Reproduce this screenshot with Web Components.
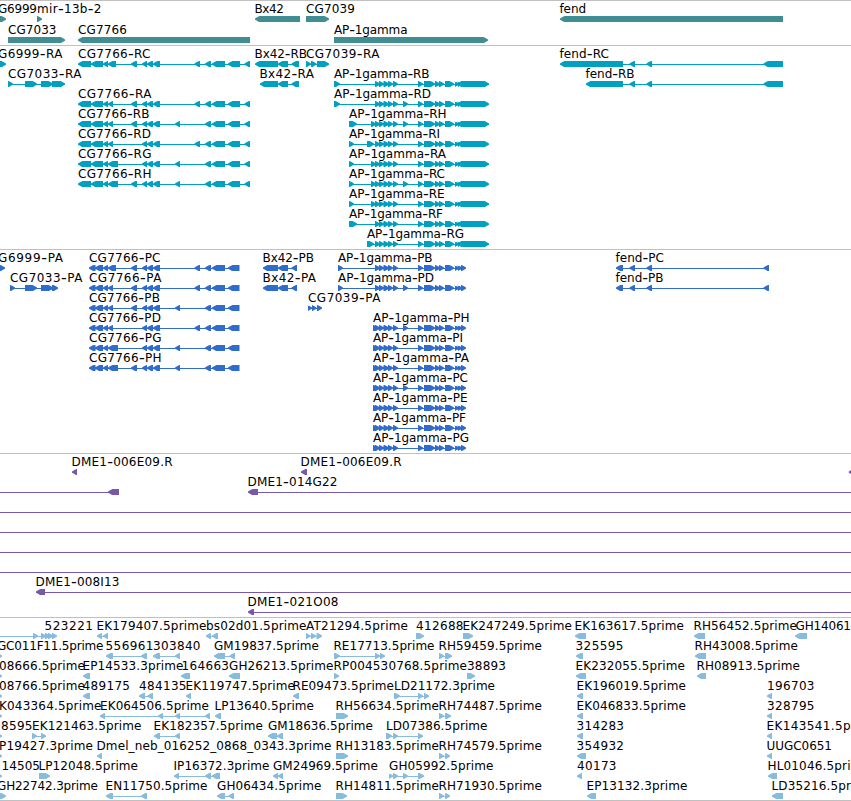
<!DOCTYPE html>
<html lang="en">
<head>
<meta charset="utf-8">
<title>Genome tracks</title>
<style>
    body {
        margin: 0;
        background: #fff;
        overflow: hidden;
        font-family: "DejaVu Sans", sans-serif;
    }
</style>
</head>
<body>
<genome-browser></genome-browser>

<script>
// One feature: a label over a chain of exons joined by an intron line.
class GenomeFeature extends HTMLElement {
    constructor() {
        super();
        this.attachShadow({ mode: 'open' });
    }

    connectedCallback() {
        this.render();
    }

    exonPath(from, to, dir) {
        const s = dir === '-' ? 1 : -1;
        const tip = dir === '-' ? from : to;
        const back = dir === '-' ? to : from;
        return `M${back} 15H${tip + s * 4.5}L${tip + s * 2} 16.3L${tip} 17.6V18.8L${tip + s * 2} 19.8L${tip + s * 4} 21H${back}Z`;
    }

    // wide hyphens, kept on the same optical height
    labelMarkup(label) {
        return label.replace(/-(.)/g, '<tspan class="dash" dy="0.8">-</tspan><tspan dy="-0.8">$1</tspan>');
    }

    render() {
        const label = this.getAttribute('label') || '';
        const x = parseFloat(this.getAttribute('x')) || 0;
        const width = this.getAttribute('width');
        const dir = this.getAttribute('dir') || '+';
        const line = (this.getAttribute('line') || '').split(':').map(Number);
        const exons = (this.getAttribute('exons') || '').split(' ').filter(Boolean)
            .map(e => e.split(':').map(Number));

        const start = line.length > 1 ? line[0] : exons.length ? exons[0][0] + 1 : 0;
        const end = line.length > 1 ? line[1] : exons.length ? exons[exons.length - 1][1] - 1 : 0;

        this.shadowRoot.innerHTML = `
            <style>
                :host { display: block; grid-area: 1 / 1; pointer-events: none; }
                svg { display: block; overflow: visible; }
                path, rect { fill: var(--feature-color, #000); }
                rect { shape-rendering: crispEdges; }
                text { font-size: 12px; fill: #000; }
                .dash { font-size: 16px; }
            </style>
            <svg width="851" height="20">
                <rect x="${start}" y="18" width="${Math.max(0, end - start)}" height="1"/>
                <path d="${exons.map(e => this.exonPath(e[0], e[1], dir)).join('')}"/>
                ${label ? `<text x="${x}" y="12" textLength="${width}">${this.labelMarkup(label)}</text>` : ''}
            </svg>
        `;
    }
}

class TrackRow extends HTMLElement {
    constructor() {
        super();
        this.attachShadow({ mode: 'open' });
        this.shadowRoot.innerHTML = `
            <style>
                :host { display: grid; grid-template: 20px / 851px; }
            </style>
            <slot></slot>
        `;
    }
}

class GenomeTrack extends HTMLElement {
    constructor() {
        super();
        this.attachShadow({ mode: 'open' });
        this.shadowRoot.innerHTML = `
            <style>
                :host {
                    display: flex;
                    flex-direction: column;
                    gap: var(--row-gap, 0);
                    padding-bottom: var(--track-pad, 3px);
                    border-top: 1px solid #c0c0c0;
                }
            </style>
            <slot></slot>
        `;
    }
}

// Shared exon runs
const cgMid = '142:147 147:153 153:160';
const cgR = '205:211 212:225 228:240 244.5:250';
const cgP = '205:211 212:225 228:239.5';
const cgHeadR = '78:91 91:103 103:108';
const cgHeadP = '89:95.5 95:103 103:108';
const apMid = '375:380 379:384 383.5:389 388:393 393:398';
const apSkip = '403:408';
const apBody = '418:423 424:435 435:440 439:444 445:454 455:459 458:462';
const apR = apBody + ' 460.5:489';
const apP = apBody + ' 461:466';
const fendMid = '629.5:635 646.5:652';

// [label, x, width, direction, exons, line]
const tracks = [
    { color: '#408e94', gap: '1px', rows: [
        [
            ['G6999', -2, 39, '+', '-5:6'],
            ['mir-13b-2', 37, 64.5, '+', '37:42'],
            ['Bx42', 254.5, 29.5, '-', '255:300'],
            ['CG7039', 306, 49, '+', '306:329'],
            ['fend', 559.5, 26.5, '-', '560:783']
        ],
        [
            ['CG7033', 8, 48.5, '+', '8:65'],
            ['CG7766', 78, 49, '-', '78:250'],
            ['AP-1gamma', 334, 73.5, '+', '334:488']
        ]
    ] },
    { color: '#00a0c0', rows: [
        [
            ['G6999-RA', -2, 64.5, '+', '-5:6'],
            ['CG7766-RC', 78, 72.5, '-', `${cgHeadR} 108:116 131:137 ${cgMid} 194.5:200 ${cgR}`],
            ['Bx42-RB', 254.5, 52.5, '-', '255:278 278:288 291.5:299'],
            ['CG7039-RA', 306, 73.5, '+', '306:311 311:316.5 317:329'],
            ['fend-RC', 559.5, 49.5, '-', `560:623 ${fendMid} 763.5:783`]
        ],
        [
            ['CG7033-RA', 8, 73.5, '+', '8:13 25:37 41:53 52:65'],
            ['Bx42-RA', 259.5, 54.5, '-', '260:278 278:288 291.5:299'],
            ['AP-1gamma-RB', 334, 95.5, '+', `334:340 ${apMid} ${apR}`],
            ['fend-RB', 585.5, 49, '-', `586:623 ${fendMid} 763.5:783`]
        ],
        [
            ['CG7766-RA', 78, 73.5, '-', `${cgHeadR} 108:113 131:137 ${cgMid} 194.5:200 ${cgR}`],
            ['AP-1gamma-RD', 334, 97, '+', `334:340 ${apMid} ${apSkip} ${apR}`]
        ],
        [
            ['CG7766-RB', 78, 71.5, '-', `${cgHeadR} 108:113 131:137 ${cgMid} 175:180 ${cgR}`],
            ['AP-1gamma-RH', 349, 97.5, '+', `349:357 371:376 ${apMid} ${apSkip} ${apR}`]
        ],
        [
            ['CG7766-RD', 78, 73, '-', `${cgHeadR} 108:113 ${cgMid} 194.5:200 ${cgR}`],
            ['AP-1gamma-RI', 349, 91, '+', `349:354 367:374 ${apMid} ${apR}`]
        ],
        [
            ['CG7766-RG', 78, 73.5, '-', `${cgHeadR} 108:118 ${cgMid} 175:180 ${cgR}`],
            ['AP-1gamma-RA', 349, 97, '+', `349:354 371:376 ${apMid} ${apR}`]
        ],
        [
            ['CG7766-RH', 78, 73.5, '-', `${cgHeadR} 108:118 131:137 ${cgMid} 175:180 ${cgR}`],
            ['AP-1gamma-RC', 349, 96, '+', `349:354 371:376 ${apMid} ${apSkip} ${apR}`]
        ],
        [['AP-1gamma-RE', 349, 95.5, '+', `349:354 371:376 ${apMid} ${apR}`]],
        [['AP-1gamma-RF', 349, 94, '+', `349:357 ${apMid} ${apR}`]],
        [['AP-1gamma-RG', 367, 97, '+', `367:374 ${apMid} ${apR}`]]
    ] },
    { color: '#306ccc', rows: [
        [
            ['G6999-PA', -2, 65, '+', '-1:5'],
            ['CG7766-PC', 89, 71.5, '-', `${cgHeadP} 108:116 131:137 ${cgMid} 194.5:200 ${cgP}`],
            ['Bx42-PB', 262.5, 51.5, '-', '263:278 278:288 291.5:297'],
            ['AP-1gamma-PB', 338, 94.5, '+', `338:343 ${apMid} ${apP}`],
            ['fend-PC', 615.5, 48.5, '-', `616:623 ${fendMid} 763.5:769`]
        ],
        [
            ['CG7033-PA', 10, 72.5, '+', '10:15 25:37 41:53 52:58'],
            ['CG7766-PA', 89, 72.5, '-', `${cgHeadP} 108:113 131:137 ${cgMid} 194.5:200 ${cgP}`],
            ['Bx42-PA', 262.5, 53.5, '-', '263:278 278:288 291.5:297'],
            ['AP-1gamma-PD', 338, 96, '+', `338:343 ${apMid} ${apSkip} ${apP}`],
            ['fend-PB', 615.5, 48, '-', `616:623 ${fendMid} 763.5:769`]
        ],
        [
            ['CG7766-PB', 89, 71, '-', `${cgHeadP} 108:113 131:137 ${cgMid} 175:180 ${cgP}`],
            ['CG7039-PA', 308, 72.5, '+', '308:312 312:316.5 317:322']
        ],
        [
            ['CG7766-PD', 89, 72, '-', `${cgHeadP} 108:113 ${cgMid} 194.5:200 ${cgP}`],
            ['AP-1gamma-PH', 373, 96.5, '+', `373:378 ${apMid} ${apSkip} ${apP}`]
        ],
        [
            ['CG7766-PG', 89, 72.5, '-', `${cgHeadP} 108:118 ${cgMid} 175:180 ${cgP}`],
            ['AP-1gamma-PI', 373, 90, '+', `373:378 ${apMid} ${apP}`]
        ],
        [
            ['CG7766-PH', 89, 72.5, '-', `${cgHeadP} 108:118 131:137 ${cgMid} 175:180 ${cgP}`],
            ['AP-1gamma-PA', 373, 96, '+', `373:378 ${apMid} ${apP}`]
        ],
        [['AP-1gamma-PC', 373, 95, '+', `373:378 ${apMid} ${apSkip} ${apP}`]],
        [['AP-1gamma-PE', 373, 94.5, '+', `373:378 ${apMid} ${apP}`]],
        [['AP-1gamma-PF', 373, 93, '+', `373:378 ${apMid} ${apP}`]],
        [['AP-1gamma-PG', 373, 96, '+', `373:378 ${apMid} ${apP}`]]
    ] },
    { color: '#7858a8', rows: [
        [
            ['DME1-006E09.R', 71.5, 101, '-', '72:77'],
            ['DME1-006E09.R', 300.5, 101, '-', '301:307'],
            ['', 0, 0, '-', '848.8:858']
        ],
        [
            ['', 0, 0, '-', '108:119', '0:110'],
            ['DME1-014G22', 247.5, 90, '-', '248:258', '250:851']
        ],
        [['', 0, 0, '-', '', '0:851']],
        [['', 0, 0, '-', '', '0:851']],
        [['', 0, 0, '-', '', '0:851']],
        [['', 0, 0, '-', '', '0:851']],
        [['DME1-008I13', 35.5, 84, '-', '36:45', '38:851']],
        [['DME1-021O08', 247.5, 91, '-', '248:254', '250:851']]
    ] },
    { color: '#88bcde', pad: '2px', rows: [
        [
            ['523221', 44.5, 48.5, '+', '33:38 41:46 45:50 48:53 52:57', '0:56'],
            ['EK179407.5prime', 96.5, 110, '-', '97:102 103:108'],
            ['bs02d01.5prime', 206, 100.5, '-', '206:211 212:218'],
            ['AT21294.5prime', 306, 102, '+', '306:310.5 311:316 316.5:322'],
            ['412688', 416, 47.5, '+', '416:424'],
            ['EK247249.5prime', 462.5, 109.5, '+', '463:473'],
            ['EK163617.5prime', 574.5, 109.5, '-', '575:586'],
            ['RH56452.5prime', 693.5, 103.5, '-', '694:705'],
            ['GH14061', 795.5, 55.5, '-', '795:807']
        ],
        [
            ['GC011F11.5prime', -3, 106.5, '+', '-4:2'],
            ['556961', 105.5, 48, '-', '106:113 141:147'],
            ['303840', 153, 47.5, '-', '153:160 175:180'],
            ['GM19837.5prime', 214, 105, '-', '214:225 229.5:235'],
            ['RE17713.5prime', 333.5, 101, '+', '334:340 375:380 380:385'],
            ['RH59459.5prime', 438.5, 103.5, '+', '439:444 445:452'],
            ['325595', 575.5, 48, '-', '576:583'],
            ['RH43008.5prime', 694.5, 103.5, '-', '695:706']
        ],
        [
            ['08666.5prime', -1, 86, '+', '-4:2'],
            ['EP14533.3prime', 82.5, 101, '-', '83:90'],
            ['164663', 181.5, 47.5, '-', '181:190'],
            ['GH26213.5prime', 229, 104.5, '-', '229:240'],
            ['RP004530768.5prime', 333.5, 133.5, '+', '334:339'],
            ['38893', 467, 39, '+', '467:475'],
            ['EK232055.5prime', 575.5, 109.5, '-', '576:586'],
            ['RH08913.5prime', 696.5, 103.5, '-', '697:706']
        ],
        [
            ['08766.5prime', -1, 86, '+', '-4:2'],
            ['489175', 82.5, 47.5, '-', '83:90'],
            ['484135', 139, 47.5, '-', '139:145 147.5:153'],
            ['EK119747.5prime', 185.5, 109.5, '-', '186:191'],
            ['RE09473.5prime', 292.5, 101.5, '-', '293:299'],
            ['LD21172.3prime', 394, 101, '+', '394:400 418:423 424:429'],
            ['EK196019.5prime', 576.5, 109.5, '-', '577:583'],
            ['196703', 767, 47.5, '-', '767:772']
        ],
        [
            ['K043364.5prime', -1, 102.5, '+', '-4:2'],
            ['EK064506.5prime', 100, 109, '-', '100:105 158:163 175:180 205:210'],
            ['LP13640.5prime', 214.5, 99.5, '-', '215:221'],
            ['RH56634.5prime', 335.5, 103.5, '+', '336:348'],
            ['RH74487.5prime', 438.5, 103.5, '+', '439:444 445:451'],
            ['EK046833.5prime', 576.5, 109.5, '-', '577:583'],
            ['328795', 767, 47.5, '-', '767:772']
        ],
        [
            ['8595', 1, 31.5, '+', '-4:2'],
            ['EK121463.5prime', 32, 109.5, '+', '32:37 41:46'],
            ['EK182357.5prime', 153.5, 109.5, '-', '154:160 175:180'],
            ['GM18636.5prime', 268, 105, '-', '268:277 277:283'],
            ['LD07386.5prime', 386, 101.5, '+', '386:392 393:398 418:423'],
            ['314283', 576.5, 47.5, '-', '577:583'],
            ['EK143541.5p', 766.5, 84, '-', '767:772']
        ],
        [
            ['P19427.3prime', -1, 94, '+', '-4:2'],
            ['Dmel_neb_016252_0868_0343.3prime', 96.5, 235, '-', '97:102'],
            ['RH13183.5prime', 335.5, 103.5, '+', '336:348'],
            ['RH74579.5prime', 438.5, 103.5, '+', '439:444 445:450'],
            ['354932', 576.5, 47.5, '-', '577:586'],
            ['UUGC0651', 766.5, 65.5, '-', '767:772']
        ],
        [
            ['14505', 1.5, 38.5, '+', '-4:2'],
            ['LP12048.5prime', 38.5, 99.5, '+', '39:50'],
            ['IP16372.3prime', 173.5, 96, '-', '174:179 205:211 212:220'],
            ['GM24969.5prime', 273, 105, '-', '273:278 278:283'],
            ['GH05992.5prime', 389, 104.5, '+', '389:393 393:398 403:408 418:424'],
            ['40173', 577, 39.5, '-', '577:582'],
            ['HL01046.5pri', 767.5, 83, '-', '768:777']
        ],
        [
            ['GH22742.3prime', -3, 101, '+', '-4:6'],
            ['EN11750.5prime', 105.5, 102, '-', '106:113 141:147'],
            ['GH06434.5prime', 217, 104.5, '-', '217:225 228.5:234'],
            ['RH14811.5prime', 335.5, 103.5, '+', '336:347'],
            ['RH71930.5prime', 438.5, 103.5, '+', '439:444 445:450'],
            ['EP13132.3prime', 586.5, 101, '-', '587:596'],
            ['LD35216.5pr', 771.5, 79.5, '-', '772:783']
        ]
    ] }
];

class GenomeBrowser extends HTMLElement {
    constructor() {
        super();
        this.attachShadow({ mode: 'open' });
    }

    connectedCallback() {
        this.render();
    }

    renderRow(row) {
        return `<track-row>${row.map(([label, x, width, dir, exons, line]) =>
            `<genome-feature label="${label}" x="${x}" width="${width}" dir="${dir}" exons="${exons}"${line ? ` line="${line}"` : ''}></genome-feature>`
        ).join('')}</track-row>`;
    }

    render() {
        this.shadowRoot.innerHTML = `
            <style>
                :host {
                    display: block;
                    width: 851px;
                    overflow: hidden;
                    border-bottom: 1px solid #c0c0c0;
                }
            </style>
            ${tracks.map(t => `
                <genome-track style="--feature-color: ${t.color}; --row-gap: ${t.gap || '0'}; --track-pad: ${t.pad || '3px'}">
                    ${t.rows.map(r => this.renderRow(r)).join('')}
                </genome-track>
            `).join('')}
        `;
    }
}

customElements.define('genome-feature', GenomeFeature);
customElements.define('track-row', TrackRow);
customElements.define('genome-track', GenomeTrack);
customElements.define('genome-browser', GenomeBrowser);
</script>
</body>
</html>
